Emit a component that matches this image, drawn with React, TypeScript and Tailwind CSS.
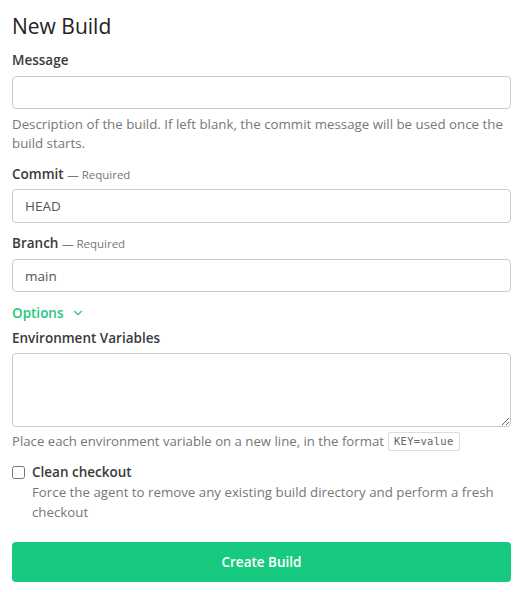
import { ChevronDown } from "lucide-react";

export default function App() {
  return (
    <div
      className="min-h-screen bg-white pl-3 pr-[11px] pt-[12px] text-[#333]"
      style={{ fontFamily: '"Open Sans", "Noto Sans", sans-serif' }}
    >
      <h1 className="text-[21px] leading-[28px] text-[#222] mb-[10px]">New Build</h1>

      {/* Message */}
      <label className="block text-[13.5px] leading-[20px] font-semibold text-[#3a3a3a] mb-[6px]">Message</label>
      <input className="block w-full h-[33px] rounded-[4px] border border-[#ccc] px-3 text-[13.5px]" />
      <p className="mt-[6px] text-[13.3px] leading-[19px] text-[#777]">
        Description of the build. If left blank, the commit message will be used once the build starts.
      </p>

      {/* Commit */}
      <label className="block mt-[11px] mb-[4px] text-[13.5px] leading-[20px] font-semibold text-[#3a3a3a]">
        Commit <span className="font-normal text-[11.5px] text-[#777]">— Required</span>
      </label>
      <input
        defaultValue="HEAD"
        className="block w-full h-[34px] rounded-[4px] border border-[#ccc] px-3 text-[13.5px] text-[#555]"
      />

      {/* Branch */}
      <label className="block mt-[10px] mb-[5px] text-[13.5px] leading-[20px] font-semibold text-[#3a3a3a]">
        Branch <span className="font-normal text-[11.5px] text-[#777]">— Required</span>
      </label>
      <input
        defaultValue="main"
        className="block w-full h-[33px] rounded-[4px] border border-[#ccc] px-3 text-[13.5px] text-[#555]"
      />

      <button className="mt-[11px] flex items-center gap-[7px] text-[13.5px] leading-[20px] font-semibold text-[#22c77a]">
        Options <ChevronDown size={14} strokeWidth={2} />
      </button>

      {/* Environment Variables */}
      <label className="block mt-[5px] mb-[5px] text-[13.5px] leading-[20px] font-semibold text-[#3a3a3a]">
        Environment Variables
      </label>
      <textarea className="block w-full h-[74px] rounded-[4px] border border-[#ccc] px-3 py-2 text-[13.5px]" />
      <p className="mt-[4px] flex items-center gap-[4px] text-[13.2px] leading-[20px] text-[#777]">
        Place each environment variable on a new line, in the format
        <code
          className="rounded-[2px] border border-[#ddd] px-[5px] text-[10.5px] leading-[17px] text-[#666] tracking-[0.3px]"
          style={{ fontFamily: '"DejaVu Sans Mono", monospace' }}
        >
          KEY=value
        </code>
      </p>

      {/* Clean checkout */}
      <div className="mt-[11px] flex gap-[7px]">
        <input type="checkbox" className="mt-[4px] h-[13px] w-[13px] shrink-0" />
        <div>
          <div className="text-[13.5px] leading-[20px] font-semibold text-[#3a3a3a]">Clean checkout</div>
          <div className="text-[13.3px] leading-[20px] text-[#777]">
            Force the agent to remove any existing build directory and perform a fresh checkout
          </div>
        </div>
      </div>

      <button className="mt-[20px] w-full h-[40px] rounded-[4px] bg-[#18ca7f] text-[13.5px] font-semibold text-white">
        Create Build
      </button>
    </div>
  );
}
